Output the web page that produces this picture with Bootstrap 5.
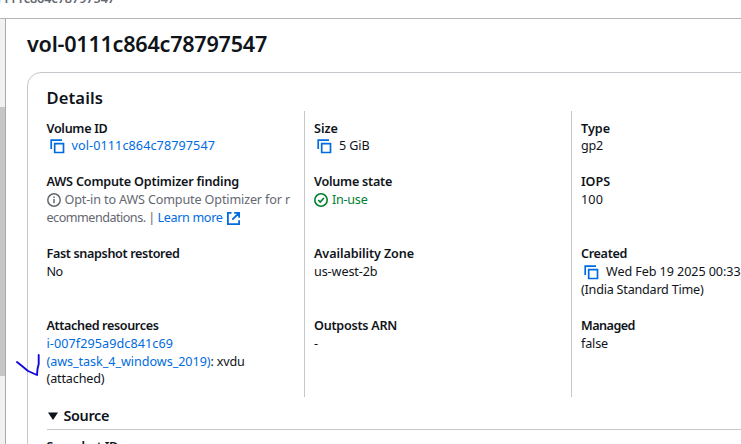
<!DOCTYPE html>
<html lang="en">
<head>
<meta charset="utf-8">
<meta name="viewport" content="width=device-width, initial-scale=1">
<title>Volume details</title>
<link href="https://cdn.jsdelivr.net/npm/bootstrap@5.3.0/dist/css/bootstrap.min.css" rel="stylesheet">
<style>
body{font-family:"Noto Sans","Open Sans",sans-serif;font-size:12.6px;line-height:18px;color:#0f141a;width:741px;height:444px;background:#fff}
a{color:#006ce0;text-decoration:none}
.crumb-bar{height:19px;border-bottom:1px solid #b4b4bb;color:#656871;font-weight:600}
.crumb-bar span{margin-top:-10px;margin-left:-5px}
.scroll-rail{width:6px;height:425px;background:#f1f1f1;border-right:1px solid #aaa}
.scroll-thumb{height:269px;margin-top:88px;background:#c6c6c6}
.main-pane{padding-left:21px;height:425px}
.page-title{font-size:21.6px;line-height:27px;margin:11px 0 15px;font-weight:600}
.detail-card{width:850px;height:500px;border:1px solid #c6c6cd;border-radius:14px;padding:14px 18px 0 18.5px}
.card-heading{font-size:16.6px;line-height:22px;margin:0 0 2px;font-weight:600}
.attr-col{width:267px;flex:none;height:286px;padding-top:8px;border-left:1px solid #c6c6cd;padding-left:9px}
.attr-col:first-child{width:257.5px;border:0;padding-left:0}
.attr-item{height:72px}
.attr-item.short{height:54px}
.attr-item.short:first-child .term{position:relative;top:.6px}
.term{font-weight:600}
.tight-line{line-height:17.3px}
.t{display:inline-block;white-space:nowrap}
svg{flex:none;display:block}
.copy-ic{margin:0 7px 0 3px}
.tone-muted{color:#656871}.tone-ok{color:#00802f}
.source-head{font-size:14.4px;font-weight:600;line-height:20px;padding:9px 0 3px;border-bottom:1px solid #c6c6cd;width:810px}
.caret-ic{margin:0 6px 0 1px}
.ink-tick{position:absolute;left:14px;top:351px}
</style>
</head>
<body class="overflow-hidden position-relative">
<svg width="0" height="0" class="position-absolute"><defs>
<symbol id="copy" viewBox="0 0 15 15"><path d="M1.2 10V1.2H12M4.7 4.7h8.8v8.8H4.7z" fill="none" stroke="#006ce0" stroke-width="1.7"/></symbol>
</defs></svg>
<header class="crumb-bar overflow-hidden d-flex"><span class="t" data-w="120">1111c864c78797547</span></header>
<div class="d-flex">
<aside class="scroll-rail flex-shrink-0 overflow-hidden"><div class="scroll-thumb"></div></aside>
<main class="main-pane flex-grow-1 overflow-hidden">
<h1 class="page-title"><span class="t" data-w="240">vol-0111c864c78797547</span></h1>
<section class="detail-card">
<h2 class="card-heading"><span class="t" data-w="56.5">Details</span></h2>
<div class="d-flex">
<div class="attr-col">
<div class="attr-item short"><div class="term"><span class="t" data-w="61">Volume ID</span></div><div class="d-flex align-items-center"><svg class="copy-ic" width="15" height="15"><use href="#copy"/></svg><a href="#"><span class="t" data-w="143.5">vol-0111c864c78797547</span></a></div></div>
<div class="attr-item"><div class="term"><span class="t" data-w="192.5">AWS Compute Optimizer finding</span></div>
<div class="d-flex align-items-center tone-muted"><svg class="me-1" width="14" height="14" viewBox="0 0 14 14" fill="none" stroke="#656871" stroke-width="1.5"><circle cx="7" cy="7" r="6.2"/><path d="M7 6v4.3M7 3.5v1.6"/></svg><span class="t" data-w="225.5">Opt-in to AWS Compute Optimizer for r</span></div>
<div class="d-flex align-items-center tone-muted"><span class="t" data-w="111">ecommendations. |&nbsp;</span><a href="#"><span class="t" data-w="65">Learn more</span></a><svg class="ms-1" width="13" height="13" viewBox="0 0 13 13" fill="none" stroke="#006ce0" stroke-width="1.8"><path d="M4.5 .9H.9v11.2h11.2V8.2M7.2.9h4.9V5.8M12 1 5.3 7.7"/></svg></div></div>
<div class="attr-item"><div class="term"><span class="t" data-w="133">Fast snapshot restored</span></div><span class="t" data-w="16">No</span></div>
<div class="attr-item"><div class="term"><span class="t" data-w="112">Attached resources</span></div><div><a href="#"><span class="t" data-w="126.5">i-007f295a9dc841c69</span></a></div><div class="text-nowrap tight-line"><a href="#"><span class="t" data-w="164">(aws_task_4_windows_2019)</span></a><span class="t" data-w="34">: xvdu</span></div><div class="tight-line"><span class="t" data-w="58">(attached)</span></div></div>
</div>
<div class="attr-col">
<div class="attr-item short"><div class="term"><span class="t" data-w="24">Size</span></div><div class="d-flex align-items-center"><svg class="copy-ic" width="15" height="15"><use href="#copy"/></svg><span class="t" data-w="30.5">5 GiB</span></div></div>
<div class="attr-item"><div class="term"><span class="t" data-w="78">Volume state</span></div><div class="d-flex align-items-center tone-ok"><svg class="me-1" width="14" height="14" viewBox="0 0 14 14" fill="none" stroke="#00802f" stroke-width="1.6"><circle cx="7" cy="7" r="6.2"/><path d="m4.2 7 2 2 3.7-4"/></svg><span class="t" data-w="35.5">In-use</span></div></div>
<div class="attr-item"><div class="term"><span class="t" data-w="100">Availability Zone</span></div><span class="t" data-w="63.5">us-west-2b</span></div>
<div class="attr-item"><div class="term"><span class="t" data-w="83">Outposts ARN</span></div>-</div>
</div>
<div class="attr-col">
<div class="attr-item short"><div class="term"><span class="t" data-w="29">Type</span></div><span class="t" data-w="22">gp2</span></div>
<div class="attr-item"><div class="term"><span class="t" data-w="29">IOPS</span></div><span class="t" data-w="22">100</span></div>
<div class="attr-item"><div class="term"><span class="t" data-w="46">Created</span></div><div class="d-flex align-items-center"><svg class="copy-ic" width="15" height="15"><use href="#copy"/></svg><span class="t" data-w="134.5">Wed Feb 19 2025 00:33</span></div><span class="t" data-w="122.5">(India Standard Time)</span></div>
<div class="attr-item"><div class="term"><span class="t" data-w="54">Managed</span></div><span class="t" data-w="27">false</span></div>
</div>
</div>
<div class="source-head d-flex align-items-center"><svg class="caret-ic" width="10" height="8" viewBox="0 0 10 8"><path d="M0 .5h10L5 8z" fill="#0f141a"/></svg><span class="t" data-w="45.5">Source</span></div>
<div class="term pt-2"><span class="t" data-w="71.5">Snapshot ID</span></div>
</section>
</main>
</div>
<svg class="ink-tick" width="30" height="30" viewBox="0 0 30 30" fill="none" stroke="#1208d8" stroke-width="1.9" stroke-linecap="round" stroke-linejoin="round"><path d="m3 11 5 4 6 5 9 4 .5-6 1.2-5V4"/></svg>
<script>
/* Track each label to its design width. */
document.querySelectorAll('.t[data-w]').forEach(function(e){
  var w=e.getBoundingClientRect().width,n=e.textContent.length;
  e.style.letterSpacing=((+e.dataset.w-w)/n).toFixed(3)+'px';
});
</script>
<script src="https://cdn.jsdelivr.net/npm/bootstrap@5.3.0/dist/js/bootstrap.bundle.min.js"></script>
</body>
</html>
